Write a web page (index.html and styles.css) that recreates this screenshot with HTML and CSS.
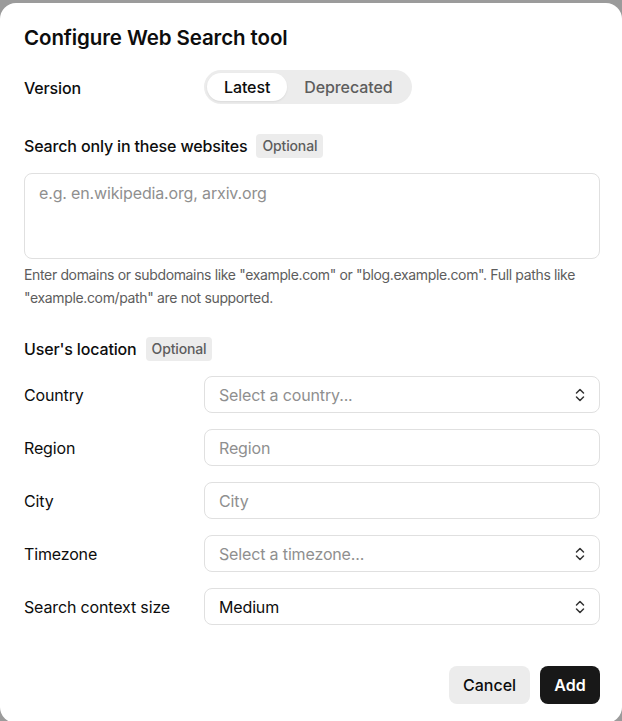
FILE: index.html
```html
<!DOCTYPE html>
<html lang="en">
<head>
<meta charset="utf-8">
<title>Configure Web Search tool</title>
<link rel="stylesheet" href="styles.css">
</head>
<body>
<div class="modal">
  <h1 class="title">Configure Web Search tool</h1>

  <div class="row version-row">
    <div class="label strong">Version</div>
    <div class="segmented">
      <button class="seg active">Latest</button>
      <button class="seg">Deprecated</button>
    </div>
  </div>

  <div class="section-head sites-head">
    <span class="strong">Search only in these websites</span>
    <span class="badge">Optional</span>
  </div>
  <div class="textarea"><span class="placeholder">e.g. en.wikipedia.org, arxiv.org</span></div>
  <p class="help">Enter domains or subdomains like "example.com" or "blog.example.com". Full paths like "example.com/path" are not supported.</p>

  <div class="section-head loc-head">
    <span class="strong">User's location</span>
    <span class="badge">Optional</span>
  </div>

  <div class="fields">
    <div class="label">Country</div>
    <div class="input select"><span class="placeholder">Select a country...</span><svg class="chev" viewBox="0 0 12 16" width="12" height="16"><path d="M2.5 6 L6 2.5 L9.5 6 M2.5 10 L6 13.5 L9.5 10" fill="none" stroke="#333" stroke-width="1.5" stroke-linecap="round" stroke-linejoin="round"/></svg></div>

    <div class="label">Region</div>
    <div class="input"><span class="placeholder">Region</span></div>

    <div class="label">City</div>
    <div class="input"><span class="placeholder">City</span></div>

    <div class="label">Timezone</div>
    <div class="input select"><span class="placeholder">Select a timezone...</span><svg class="chev" viewBox="0 0 12 16" width="12" height="16"><path d="M2.5 6 L6 2.5 L9.5 6 M2.5 10 L6 13.5 L9.5 10" fill="none" stroke="#333" stroke-width="1.5" stroke-linecap="round" stroke-linejoin="round"/></svg></div>

    <div class="label">Search context size</div>
    <div class="input select"><span class="value">Medium</span><svg class="chev" viewBox="0 0 12 16" width="12" height="16"><path d="M2.5 6 L6 2.5 L9.5 6 M2.5 10 L6 13.5 L9.5 10" fill="none" stroke="#333" stroke-width="1.5" stroke-linecap="round" stroke-linejoin="round"/></svg></div>
  </div>

  <div class="actions">
    <button class="btn cancel">Cancel</button>
    <button class="btn add">Add</button>
  </div>
</div>
</body>
</html>
```
FILE: styles.css
```css
* { box-sizing: border-box; }
html, body { margin: 0; padding: 0; }
body {
  background: #9b9b9b;
  font-family: Inter, "Noto Sans", "Liberation Sans", sans-serif;
  color: #0d0d0d;
  padding-top: 3px;
  height: 721px;
  overflow: hidden;
  letter-spacing: -0.15px;
}
.modal {
  background: #fff;
  border-radius: 16px;
  height: 720px;
  padding: 23px 22px 0 24px;
  display: flex;
  flex-direction: column;
}
.title {
  margin: 0;
  font-size: 20.5px;
  line-height: 24px;
  font-weight: 600;
  letter-spacing: -0.1px;
}
.strong { font-weight: 500; font-size: 16px; }
.label { font-size: 16px; line-height: 20px; color: #0d0d0d; }
.row { display: flex; align-items: center; }
.version-row { margin-top: 20px; }
.version-row .label { width: 180px; }
.segmented {
  display: flex;
  background: #ececec;
  border-radius: 999px;
  padding: 3px;
  height: 34px;
}
.seg {
  font: inherit;
  font-size: 16px;
  font-weight: 500;
  border: none;
  background: transparent;
  color: #5d5d5d;
  border-radius: 999px;
  padding: 0 17px;
  height: 28px;
  cursor: pointer;
  letter-spacing: -0.1px;
}
.seg.active {
  background: #fff;
  color: #0d0d0d;
  padding: 0 17px;
  box-shadow: 0 1px 2px rgba(0,0,0,0.08);
}
.section-head { display: flex; align-items: center; gap: 9px; }
.sites-head { margin-top: 30px; }
.loc-head { margin-top: 28px; }
.badge {
  background: #ececec;
  color: #5d5d5d;
  font-size: 14px;
  font-weight: 500;
  border-radius: 4px;
  padding: 0 6px;
  height: 24px;
  line-height: 24px;
}
.textarea {
  margin-top: 15px;
  height: 86px;
  border: 1px solid #e0e0e0;
  border-radius: 8px;
  padding: 9px 14px;
  font-size: 16px;
  line-height: 20px;
}
.placeholder { color: #8f8f8f; font-size: 16px; }
.value { color: #0d0d0d; font-size: 16px; }
.help {
  margin: 4px 0 0;
  font-size: 14px;
  line-height: 23px;
  color: #5d5d5d;
  letter-spacing: -0.35px;
}
.fields {
  margin-top: 15px;
  display: grid;
  grid-template-columns: 180px 1fr;
  row-gap: 16px;
  align-items: center;
}
.input {
  height: 37px;
  border: 1px solid #e0e0e0;
  border-radius: 8px;
  padding: 0 14px;
  display: flex;
  align-items: center;
  justify-content: space-between;
}
.label { padding-top: 1px; }
.chev { flex: none; margin-right: -1px; }
.actions {
  margin-top: auto;
  margin-bottom: 19px;
  display: flex;
  justify-content: flex-end;
  gap: 10px;
}
.btn {
  font: inherit;
  font-size: 16px;
  font-weight: 500;
  height: 38px;
  border: none;
  border-radius: 8px;
  padding: 0 14px;
  cursor: pointer;
}
.cancel { background: #ececec; color: #0d0d0d; width: 81px; }
.add { background: #181818; color: #fff; width: 60px; font-weight: 600; }
```
